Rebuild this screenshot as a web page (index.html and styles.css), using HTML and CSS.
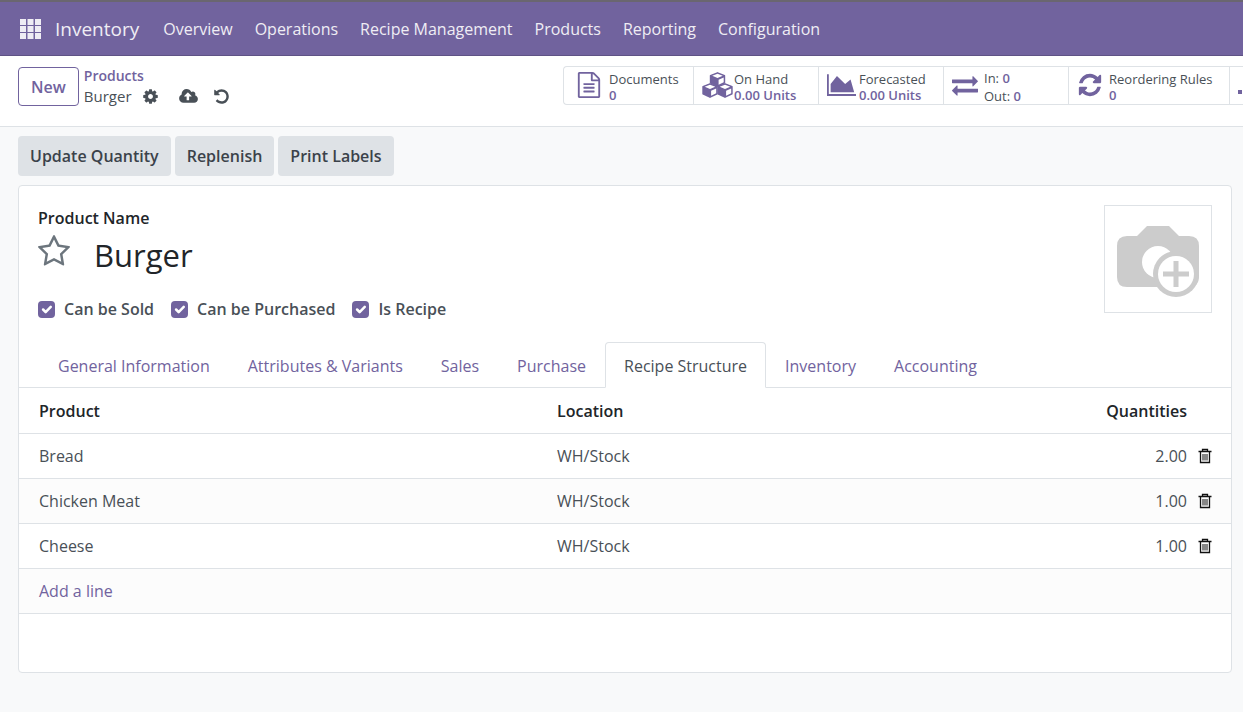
FILE: index.html
```html
<!DOCTYPE html>
<html lang="en">
<head>
<meta charset="utf-8">
<title>Burger - Inventory</title>
<link rel="stylesheet" href="styles.css">
</head>
<body>
<svg class="defs" aria-hidden="true">
  <symbol id="trash" viewBox="0 0 14 16">
    <path d="M4.500 3V1.500h5V3M0.500 3.500h13M2.500 4v10.500h9V4" fill="none" stroke="currentColor" stroke-width="1.300"/>
    <path d="M5 6v6.500M7 6v6.500M9 6v6.500" fill="none" stroke="currentColor" stroke-width="1"/>
  </symbol>
  <symbol id="cube" viewBox="0 0 16 15">
    <path d="M8 0.800L15 3.600V10.800L8 14.200L1 10.800V3.600Z" fill="currentColor" stroke="currentColor" stroke-width="1.400" stroke-linejoin="round"/>
    <path d="M8 1.700L13.300 3.800L8 6L2.700 3.800Z M9.100 7.700L14.200 5.600V10.300L9.100 12.800Z" fill="#fff"/>
  </symbol>
</svg>
<header class="navbar">
  <button class="apps" aria-label="Apps">
    <svg viewBox="0 0 21 20" width="21" height="20"><path fill="currentColor" d="M0 0h6v6H0zM7.500 0h6v6h-6zM15 0h6v6h-6zM0 7h6v6H0zM7.500 7h6v6h-6zM15 7h6v6h-6zM0 14h6v6H0zM7.500 14h6v6h-6zM15 14h6v6h-6z"/></svg>
  </button>
  <a class="brand" href="#">Inventory</a>
  <nav class="menu">
    <a href="#">Overview</a><a href="#">Operations</a><a href="#">Recipe Management</a><a href="#">Products</a><a href="#">Reporting</a><a href="#">Configuration</a>
  </nav>
</header>
<div class="control">
  <button class="new">New</button>
  <div class="crumbs">
    <a href="#">Products</a>
    <div class="current">
      <span>Burger</span>
      <button class="tool" aria-label="Actions"><svg viewBox="0 0 1792 1792" width="17" height="17"><path fill="currentColor" d="M1152 896q0-106-75-181t-181-75-181 75-75 181 75 181 181 75 181-75 75-181zm512-109v222q0 12-8 23t-20 13l-185 28q-19 54-39 91 35 50 107 138 10 12 10 25t-9 23q-27 37-99 108t-94 71q-12 0-26-9l-138-108q-44 23-91 38-16 136-29 186-7 28-36 28h-222q-14 0-24.500-8.500t-11.500-21.500l-28-184q-49-16-90-37l-141 107q-10 9-25 9-14 0-25-11-126-114-165-168-7-10-7-23 0-12 8-23 15-21 51-66.500t54-70.500q-27-50-41-99l-183-27q-13-2-21-12.500t-8-23.500v-222q0-12 8-23t19-13l186-28q14-46 39-92-40-57-107-138-10-12-10-24 0-10 9-23 26-36 98.500-107.500t94.500-71.500q13 0 26 10l138 107q44-23 91-38 16-136 29-186 7-28 36-28h222q14 0 24.500 8.500t11.500 21.500l28 184q49 16 90 37l142-107q9-9 24-9 13 0 25 10 129 119 165 170 7 8 7 22 0 12-8 23-15 21-51 66.500t-54 70.500q26 50 41 98l183 28q13 2 21 12.500t8 23.500z"/></svg></button>
      <button class="tool save" aria-label="Save"><svg viewBox="0 128 1920 1536" width="19" height="15"><path fill="currentColor" d="M1280 864q0-14-9-23l-352-352q-9-9-23-9t-23 9l-351 351q-10 12-10 24 0 14 9 23t23 9h224v352q0 13 9.500 22.500t22.500 9.500h192q13 0 22.500-9.500t9.500-22.500v-352h224q13 0 22.500-9.500t9.500-22.500zm640 288q0 159-112.500 271.500t-271.500 112.500h-1088q-185 0-316.500-131.500t-131.500-316.500q0-130 70-240t188-165q-2-30-2-43 0-212 150-362t362-150q156 0 285.500 87t188.500 231q71-62 166-62 106 0 181 75t75 181q0 76-41 138 130 31 213.500 135.500t83.500 238.500z"/></svg></button>
      <button class="tool" aria-label="Discard"><svg viewBox="0 0 1792 1792" width="17" height="17"><path fill="currentColor" d="M1664 896q0 156-61 298t-164 245-245 164-298 61q-172 0-327-72.500t-264-204.500q-7-10-6.500-22.500t8.500-20.500l137-138q10-9 25-9 16 2 23 12 73 95 179 147t225 52q104 0 198.500-40.500t163.500-109.500 109.500-163.500 40.500-198.500-40.500-198.500-109.500-163.500-163.500-109.500-198.500-40.500q-98 0-188 35.500t-160 101.500l137 138q31 30 14 69-17 40-59 40h-448q-26 0-45-19t-19-45v-448q0-42 40-59 39-17 69 14l130 129q107-101 244.500-156.500t284.500-55.500q156 0 298 61t245 164 164 245 61 298z"/></svg></button>
    </div>
  </div>
  <div class="stats">
    <button class="stat documents">
      <svg viewBox="0 0 1792 1792" width="26" height="26"><path fill="currentColor" d="M1596 380q28 28 48 76t20 88v1152q0 40-28 68t-68 28h-1344q-40 0-68-28t-28-68v-1600q0-40 28-68t68-28h896q40 0 88 20t76 48zm-444-244v376h376q-10-29-22-41l-313-313q-12-12-41-22zm384 1528v-1024h-416q-40 0-68-28t-28-68v-416h-768v1536h1280zm-1024-864q0-14 9-23t23-9h704q14 0 23 9t9 23v64q0 14-9 23t-23 9h-704q-14 0-23-9t-9-23v-64zm736 224q14 0 23 9t9 23v64q0 14-9 23t-23 9h-704q-14 0-23-9t-9-23v-64q0-14 9-23t23-9h704zm0 256q14 0 23 9t9 23v64q0 14-9 23t-23 9h-704q-14 0-23-9t-9-23v-64q0-14 9-23t23-9h704z"/></svg>
      <span class="info"><span>Documents</span><b>0</b></span>
    </button>
    <button class="stat onhand">
      <svg viewBox="0 0 31 26" width="31" height="26"><use href="#cube" x="7" y="0" width="17" height="15"/><use href="#cube" x="0" y="11" width="16" height="15"/><use href="#cube" x="15" y="11" width="16" height="15"/></svg>
      <span class="info"><span>On Hand</span><b>0.00 Units</b></span>
    </button>
    <button class="stat forecast">
      <svg viewBox="0 128 2048 1536" width="29" height="22"><path fill="currentColor" d="M2048 1536v128h-2048v-1536h128v1408h1920zm-384-1024l256 896h-1664v-576l448-576 576 576z"/></svg>
      <span class="info"><span>Forecasted</span><b>0.00 Units</b></span>
    </button>
    <button class="stat moves">
      <svg viewBox="0 0 1792 1792" width="26" height="26"><path fill="currentColor" d="M1792 1184v192q0 13-9.500 22.500t-22.500 9.500h-1376v192q0 13-9.500 22.500t-22.500 9.500q-12 0-24-10l-319-320q-9-9-9-22 0-14 9-23l320-320q9-9 23-9 13 0 22.500 9.500t9.500 22.500v192h1376q13 0 22.500 9.500t9.500 22.500zm0-544q0 14-9 23l-320 320q-9 9-23 9-13 0-22.500-9.500t-9.500-22.500v-192h-1376q-13 0-22.500-9.500t-9.500-22.500v-192q0-13 9.500-22.500t22.500-9.500h1376v-192q0-14 9-23t23-9q12 0 24 10l319 319q9 9 9 23z"/></svg>
      <span class="info"><span>In: <b>0</b></span><span>Out: <b>0</b></span></span>
    </button>
    <button class="stat rules">
      <svg viewBox="0 0 1792 1792" width="26" height="26"><path fill="currentColor" d="M1639 1056q0 5-1 7-64 268-268 434.500t-478 166.500q-146 0-282.500-55t-243.500-157l-129 129q-19 19-45 19t-45-19-19-45v-448q0-26 19-45t45-19h448q26 0 45 19t19 45-19 45l-137 137q71 66 161 102t187 36q134 0 250-65t186-179q11-17 53-117 8-23 30-23h192q13 0 22.500 9.500t9.500 22.500zm25-800v448q0 26-19 45t-45 19h-448q-26 0-45-19t-19-45 19-45l138-138q-148-137-349-137-134 0-250 65t-186 179q-11 17-53 117-8 23-30 23h-199q-13 0-22.500-9.500t-9.500-22.500v-7q65-268 270-434.500t480-166.500q146 0 284 55.500t245 156.500l130-129q19-19 45-19t45 19 19 45z"/></svg>
      <span class="info"><span>Reordering Rules</span><b>0</b></span>
    </button>
    <button class="stat more" aria-label="More">
      <svg viewBox="0 0 26 24" width="26" height="24"><path fill="currentColor" d="M0 17h4v4H0zM7 12h5v9H7zM14 6h5v15h-5z"/></svg>
    </button>
  </div>
</div>
<main class="form">
  <div class="actions"><button>Update Quantity</button><button>Replenish</button><button>Print Labels</button></div>
  <section class="sheet">
    <div class="head">
      <div class="title">
        <label for="name">Product Name</label>
        <div class="name">
          <button class="star" aria-label="Favorite"><svg viewBox="64 32 1664 1664" width="32" height="32"><path fill="currentColor" d="M1201 1004l306-297-422-62-189-382-189 382-422 62 306 297-73 421 378-199 377 199zm527-357q0 22-26 48l-363 354 86 500q1 7 1 20 0 50-41 50-19 0-40-12l-449-236-449 236q-22 12-40 12-21 0-31.500-14.500t-10.500-35.500q0-6 2-20l86-500-364-354q-25-27-25-48 0-37 56-46l502-73 225-455q19-41 49-41t49 41l225 455 502 73q56 9 56 46z"/></svg></button>
          <input id="name" type="text" value="Burger">
        </div>
        <div class="checks">
          <label><input type="checkbox" checked>Can be Sold</label>
          <label><input type="checkbox" checked>Can be Purchased</label>
          <label><input type="checkbox" checked>Is Recipe</label>
        </div>
      </div>
      <button class="photo" aria-label="Product image">
        <svg viewBox="0 0 84 74" width="84" height="74">
          <path fill="#ccc" d="M11 11H21L31 1H53L63 11H73Q83 11 83 21V52Q83 62 73 62H11Q1 62 1 52V21Q1 11 11 11Z"/>
          <circle cx="42" cy="37" r="16" fill="#fff"/>
          <circle cx="60" cy="49" r="23" fill="#ccc"/>
          <circle cx="60" cy="49" r="18" fill="#fff"/>
          <path stroke="#ccc" stroke-width="5" d="M47 49H73M60 36V62"/>
        </svg>
      </button>
    </div>
    <nav class="tabs">
      <a href="#">General Information</a><a href="#">Attributes &amp; Variants</a><a href="#">Sales</a><a href="#">Purchase</a><a class="active" href="#">Recipe Structure</a><a href="#">Inventory</a><a href="#">Accounting</a>
    </nav>
    <table class="lines">
      <thead><tr><th class="product">Product</th><th>Location</th><th class="qty">Quantities</th><th class="del"></th></tr></thead>
      <tbody>
        <tr><td>Bread</td><td>WH/Stock</td><td class="qty">2.00</td><td class="del"><button aria-label="Delete Bread"><svg width="14" height="16"><use href="#trash"/></svg></button></td></tr>
        <tr><td>Chicken Meat</td><td>WH/Stock</td><td class="qty">1.00</td><td class="del"><button aria-label="Delete Chicken Meat"><svg width="14" height="16"><use href="#trash"/></svg></button></td></tr>
        <tr><td>Cheese</td><td>WH/Stock</td><td class="qty">1.00</td><td class="del"><button aria-label="Delete Cheese"><svg width="14" height="16"><use href="#trash"/></svg></button></td></tr>
        <tr><td colspan="4"><a href="#">Add a line</a></td></tr>
      </tbody>
    </table>
  </section>
</main>
</body>
</html>
```
FILE: styles.css
```css
* { box-sizing: border-box; }
body {
  margin: 0;
  background: #f8f9fa;
  color: #495057;
  font: 16px/24px "Segoe UI", "Open Sans", "Noto Sans", sans-serif;
  overflow-x: hidden;
}
a { color: #71639e; text-decoration: none; }
button { font: inherit; color: inherit; background: none; border: 0; padding: 0; }
svg { display: block; flex: none; }
.defs { position: absolute; width: 0; height: 0; }

.navbar {
  display: flex;
  align-items: center;
  height: 56px;
  padding: 0 20px;
  background: #71639e;
  border-top: 2px solid #6a6670;
  border-bottom: 1px solid #5f5385;
}
.navbar a { color: #efedf4; }
.apps { color: #efedf4; margin-right: 14px; }
.navbar .brand { font-size: 19px; margin-right: 24px; }
.menu { display: flex; gap: 22px; white-space: nowrap; }

.control {
  display: flex;
  align-items: flex-start;
  height: 71px;
  padding: 10px 0 0 18px;
  background: #fff;
  border-bottom: 1px solid #dee2e6;
  overflow: hidden;
}
.new {
  height: 39px;
  padding: 0 12px;
  margin-top: 1px;
  border: 1px solid #71639e;
  border-radius: 4px;
  color: #71639e;
  font-weight: 600;
}
.crumbs { margin-left: 5px; font-size: 15px; line-height: 20px; }
.crumbs a { display: block; font-size: 14px; font-weight: 600; }
.current { display: flex; align-items: center; }
.tool { margin-left: 10px; color: #495057; }
.tool.save { margin-left: 20px; }
.tool:last-child { margin-left: 15px; }

.stats {
  display: flex;
  height: 39px;
  margin-left: auto;
  border: 1px solid #dee2e6;
  border-right: 0;
  border-radius: 4px 0 0 4px;
  width: 680px;
  overflow: hidden;
}
.stat {
  display: flex;
  flex: none;
  align-items: center;
  width: 125px;
  padding: 0 0 2px 8px;
  color: #71639e;
  border-right: 1px solid #dee2e6;
  font-size: 13px;
  line-height: 16px;
  text-align: left;
  white-space: nowrap;
}
.info { display: flex; flex-direction: column; padding-top: 5px; }
.info span { color: #495057; }
.info b { color: #71639e; font-weight: 600; }
.documents { width: 130px; padding-left: 12px; gap: 7px; }
.onhand { gap: 1px; }
.forecast { gap: 3px; }
.moves { gap: 6px; line-height: 18px; }
.rules { width: 161px; gap: 6px; }

.form { padding: 9px 11px 39px 18px; }
.actions { display: flex; gap: 4px; }
.actions button {
  height: 40px;
  padding: 0 12px;
  border-radius: 4px;
  background: #dee2e6;
  color: #3b424a;
  font-weight: 600;
}
.sheet {
  margin-top: 9px;
  padding-bottom: 58px;
  background: #fff;
  border: 1px solid #dee2e6;
  border-radius: 4px;
}
.head { display: flex; justify-content: space-between; padding: 19px 19px 0; }
.title { padding-top: 1px; }
.title > label { display: block; color: #212529; font-weight: 600; }
.name { display: flex; align-items: center; height: 50px; gap: 24px; }
.star { color: #6c757d; margin-bottom: 8px; }
.name input {
  width: 400px;
  padding: 0;
  border: 0;
  color: #212529;
  background: none;
  font: inherit;
  font-size: 31px;
  line-height: 48px;
}
.checks { display: flex; gap: 17px; margin-top: 17px; font-weight: 600; }
.checks label { display: flex; align-items: center; gap: 9px; }
.checks input {
  appearance: none;
  width: 17px;
  height: 17px;
  margin: 0;
  border-radius: 4px;
  background: #71639e url("data:image/svg+xml,%3Csvg xmlns='http://www.w3.org/2000/svg' viewBox='0 0 20 20'%3E%3Cpath fill='none' stroke='%23fff' stroke-linecap='round' stroke-linejoin='round' stroke-width='3' d='m6 10 3 3 6-6'/%3E%3C/svg%3E") center / contain;
}
.photo {
  display: grid;
  place-items: center;
  width: 108px;
  height: 108px;
  padding-top: 6px;
  border: 1px solid #dee2e6;
}

.tabs {
  display: flex;
  margin-top: 21px;
  padding-left: 20px;
  border-bottom: 1px solid #dee2e6;
}
.tabs a {
  padding: 11px 18px 9px;
  margin-bottom: -1px;
  border: 1px solid transparent;
  line-height: 24px;
  white-space: nowrap;
}
.tabs .active {
  color: #495057;
  background: #fff;
  border-color: #dee2e6 #dee2e6 #fff;
  border-radius: 4px 4px 0 0;
}
.lines { width: 100%; border-collapse: collapse; table-layout: fixed; }
.lines th, .lines td {
  height: 45px;
  padding: 1px 0 0 20px;
  border-bottom: 1px solid #dee2e6;
  text-align: left;
  font-weight: 400;
}
.lines th { color: #212529; font-weight: 600; }
.lines .product { width: 518px; }
.lines .qty { text-align: right; }
.lines .del { width: 44px; padding: 1px 0 0 11px; color: #111; }
.del button { display: block; }
.lines tbody tr:nth-child(even) { background: #fcfcfc; }
```
